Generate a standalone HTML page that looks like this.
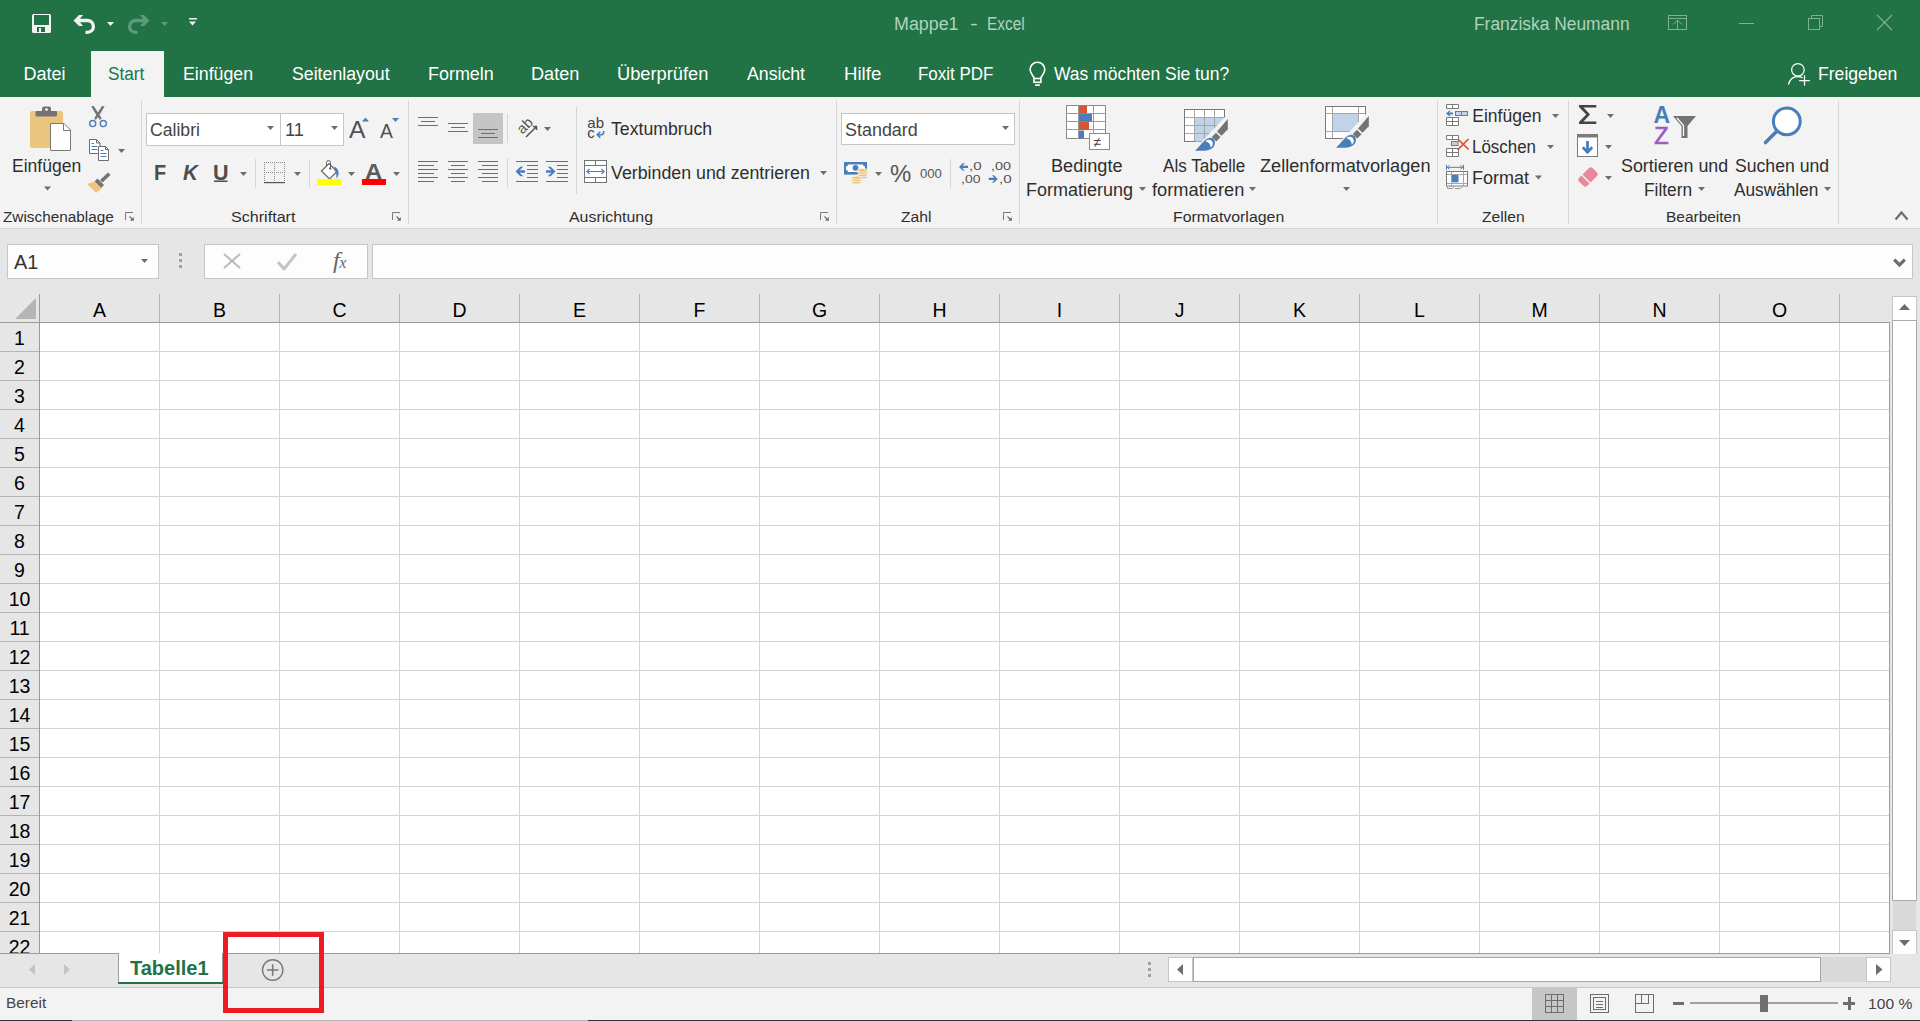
<!DOCTYPE html>
<html><head><meta charset="utf-8"><title>Excel</title><style>
html,body{margin:0;padding:0}
body{width:1920px;height:1021px;overflow:hidden;position:relative;background:#fff;font-family:"Liberation Sans",sans-serif}
.tx{position:absolute;white-space:pre;transform-origin:0 0}
svg{position:absolute;left:0;top:0}
.clip{position:absolute;left:0;top:954px;width:1920px;height:67px;overflow:hidden}
</style></head><body>
<svg width="1920" height="1021" viewBox="0 0 1920 1021">
<rect x="0" y="0" width="1920" height="97" fill="#217346" />
<rect x="91" y="51" width="73" height="46" fill="#f3f3f3" />
<rect x="0" y="97" width="1920" height="131" fill="#f3f3f3" />
<rect x="0" y="228" width="1920" height="1" fill="#d5d5d5" />
<rect x="0" y="229" width="1920" height="93" fill="#e6e6e6" />
<rect x="7" y="244" width="152" height="35" fill="#c6c6c6" />
<rect x="8" y="245" width="150" height="33" fill="#fdfdfd" />
<rect x="204" y="244" width="164" height="35" fill="#c6c6c6" />
<rect x="205" y="245" width="162" height="33" fill="#fdfdfd" />
<rect x="372" y="244" width="1541" height="35" fill="#c6c6c6" />
<rect x="373" y="245" width="1539" height="33" fill="#fdfdfd" />
<polygon points="141,259 148,259 144.5,263" fill="#6d6d6d"/>
<path d="M1895.3 260.7 L1899.5 264.9 L1903.7 260.7" stroke="#6d6d6d" stroke-width="3.2" fill="none" stroke-linecap="square"/>
<rect x="179" y="253" width="3" height="3" fill="#a0a0a0" />
<rect x="179" y="259" width="3" height="3" fill="#a0a0a0" />
<rect x="179" y="265" width="3" height="3" fill="#a0a0a0" />
<path d="M224 254 L240 268 M240 254 L224 268" stroke="#bdbdbd" stroke-width="2.2" fill="none"/>
<path d="M278 262 L284 269 L296 254" stroke="#c4c4c4" stroke-width="3" fill="none" stroke-linejoin="round"/>
<rect x="40" y="323" width="1849" height="630" fill="#ffffff" />
<rect x="0" y="323" width="39" height="630" fill="#e6e6e6" />
<rect x="159" y="294" width="1" height="28" fill="#b4b4b4" />
<rect x="279" y="294" width="1" height="28" fill="#b4b4b4" />
<rect x="399" y="294" width="1" height="28" fill="#b4b4b4" />
<rect x="519" y="294" width="1" height="28" fill="#b4b4b4" />
<rect x="639" y="294" width="1" height="28" fill="#b4b4b4" />
<rect x="759" y="294" width="1" height="28" fill="#b4b4b4" />
<rect x="879" y="294" width="1" height="28" fill="#b4b4b4" />
<rect x="999" y="294" width="1" height="28" fill="#b4b4b4" />
<rect x="1119" y="294" width="1" height="28" fill="#b4b4b4" />
<rect x="1239" y="294" width="1" height="28" fill="#b4b4b4" />
<rect x="1359" y="294" width="1" height="28" fill="#b4b4b4" />
<rect x="1479" y="294" width="1" height="28" fill="#b4b4b4" />
<rect x="1599" y="294" width="1" height="28" fill="#b4b4b4" />
<rect x="1719" y="294" width="1" height="28" fill="#b4b4b4" />
<rect x="1839" y="294" width="1" height="28" fill="#b4b4b4" />
<rect x="40" y="351" width="1849" height="1" fill="#d4d4d4" />
<rect x="0" y="351" width="39" height="1" fill="#b4b4b4" />
<rect x="40" y="380" width="1849" height="1" fill="#d4d4d4" />
<rect x="0" y="380" width="39" height="1" fill="#b4b4b4" />
<rect x="40" y="409" width="1849" height="1" fill="#d4d4d4" />
<rect x="0" y="409" width="39" height="1" fill="#b4b4b4" />
<rect x="40" y="438" width="1849" height="1" fill="#d4d4d4" />
<rect x="0" y="438" width="39" height="1" fill="#b4b4b4" />
<rect x="40" y="467" width="1849" height="1" fill="#d4d4d4" />
<rect x="0" y="467" width="39" height="1" fill="#b4b4b4" />
<rect x="40" y="496" width="1849" height="1" fill="#d4d4d4" />
<rect x="0" y="496" width="39" height="1" fill="#b4b4b4" />
<rect x="40" y="525" width="1849" height="1" fill="#d4d4d4" />
<rect x="0" y="525" width="39" height="1" fill="#b4b4b4" />
<rect x="40" y="554" width="1849" height="1" fill="#d4d4d4" />
<rect x="0" y="554" width="39" height="1" fill="#b4b4b4" />
<rect x="40" y="583" width="1849" height="1" fill="#d4d4d4" />
<rect x="0" y="583" width="39" height="1" fill="#b4b4b4" />
<rect x="40" y="612" width="1849" height="1" fill="#d4d4d4" />
<rect x="0" y="612" width="39" height="1" fill="#b4b4b4" />
<rect x="40" y="641" width="1849" height="1" fill="#d4d4d4" />
<rect x="0" y="641" width="39" height="1" fill="#b4b4b4" />
<rect x="40" y="670" width="1849" height="1" fill="#d4d4d4" />
<rect x="0" y="670" width="39" height="1" fill="#b4b4b4" />
<rect x="40" y="699" width="1849" height="1" fill="#d4d4d4" />
<rect x="0" y="699" width="39" height="1" fill="#b4b4b4" />
<rect x="40" y="728" width="1849" height="1" fill="#d4d4d4" />
<rect x="0" y="728" width="39" height="1" fill="#b4b4b4" />
<rect x="40" y="757" width="1849" height="1" fill="#d4d4d4" />
<rect x="0" y="757" width="39" height="1" fill="#b4b4b4" />
<rect x="40" y="786" width="1849" height="1" fill="#d4d4d4" />
<rect x="0" y="786" width="39" height="1" fill="#b4b4b4" />
<rect x="40" y="815" width="1849" height="1" fill="#d4d4d4" />
<rect x="0" y="815" width="39" height="1" fill="#b4b4b4" />
<rect x="40" y="844" width="1849" height="1" fill="#d4d4d4" />
<rect x="0" y="844" width="39" height="1" fill="#b4b4b4" />
<rect x="40" y="873" width="1849" height="1" fill="#d4d4d4" />
<rect x="0" y="873" width="39" height="1" fill="#b4b4b4" />
<rect x="40" y="902" width="1849" height="1" fill="#d4d4d4" />
<rect x="0" y="902" width="39" height="1" fill="#b4b4b4" />
<rect x="40" y="931" width="1849" height="1" fill="#d4d4d4" />
<rect x="0" y="931" width="39" height="1" fill="#b4b4b4" />
<rect x="159" y="323" width="1" height="630" fill="#d4d4d4" />
<rect x="279" y="323" width="1" height="630" fill="#d4d4d4" />
<rect x="399" y="323" width="1" height="630" fill="#d4d4d4" />
<rect x="519" y="323" width="1" height="630" fill="#d4d4d4" />
<rect x="639" y="323" width="1" height="630" fill="#d4d4d4" />
<rect x="759" y="323" width="1" height="630" fill="#d4d4d4" />
<rect x="879" y="323" width="1" height="630" fill="#d4d4d4" />
<rect x="999" y="323" width="1" height="630" fill="#d4d4d4" />
<rect x="1119" y="323" width="1" height="630" fill="#d4d4d4" />
<rect x="1239" y="323" width="1" height="630" fill="#d4d4d4" />
<rect x="1359" y="323" width="1" height="630" fill="#d4d4d4" />
<rect x="1479" y="323" width="1" height="630" fill="#d4d4d4" />
<rect x="1599" y="323" width="1" height="630" fill="#d4d4d4" />
<rect x="1719" y="323" width="1" height="630" fill="#d4d4d4" />
<rect x="1839" y="323" width="1" height="630" fill="#d4d4d4" />
<rect x="0" y="322" width="1889" height="1" fill="#9b9b9b" />
<rect x="39" y="294" width="1" height="659" fill="#9b9b9b" />
<rect x="1889" y="322" width="1" height="632" fill="#9b9b9b" />
<polygon points="15,319 36,319 36,298" fill="#b5b5b5"/>
<rect x="1890" y="322" width="30" height="632" fill="#e6e6e6" />
<rect x="1892" y="296" width="25" height="25" fill="#c6c6c6" />
<rect x="1893" y="297" width="23" height="23" fill="#fff" />
<polygon points="1899,310 1910,310 1904.5,304" fill="#6d6d6d"/>
<rect x="1892" y="320" width="25" height="581" fill="#ababab" />
<rect x="1893" y="321" width="23" height="579" fill="#fff" />
<rect x="1893" y="901" width="23" height="29" fill="#d9d9d9" />
<rect x="1892" y="930" width="25" height="25" fill="#c6c6c6" />
<rect x="1893" y="931" width="23" height="23" fill="#fdfdfd" />
<polygon points="1899,940 1910,940 1904.5,946" fill="#6d6d6d"/>
<rect x="0" y="954" width="1920" height="33" fill="#e6e6e6" />
<rect x="0" y="953" width="1890" height="1" fill="#9b9b9b" />
<rect x="0" y="987" width="1920" height="1" fill="#c8c8c8" />
<rect x="118" y="953" width="105" height="30" fill="#ffffff" />
<rect x="118" y="953" width="1" height="30" fill="#9b9b9b" />
<rect x="222" y="953" width="1" height="30" fill="#9b9b9b" />
<rect x="119" y="953" width="103" height="1" fill="#ffffff" />
<rect x="118" y="982" width="105" height="2" fill="#217346" />
<polygon points="35,964 35,975 29,969.5" fill="#c3c3c3"/>
<polygon points="64,964 64,975 70,969.5" fill="#c3c3c3"/>
<circle cx="272.7" cy="970" r="10.2" stroke="#7a7a7a" stroke-width="1.4" fill="none"/>
<path d="M267 970 H278.4 M272.7 964.3 V975.7" stroke="#7a7a7a" stroke-width="1.6"/>
<rect x="1148" y="962" width="3" height="3" fill="#a0a0a0" />
<rect x="1148" y="968" width="3" height="3" fill="#a0a0a0" />
<rect x="1148" y="974" width="3" height="3" fill="#a0a0a0" />
<rect x="1168" y="957" width="25" height="25" fill="#c6c6c6" />
<rect x="1169" y="958" width="23" height="23" fill="#fff" />
<polygon points="1183,964 1183,975 1177,969.5" fill="#6d6d6d"/>
<rect x="1193" y="957" width="628" height="25" fill="#a6a6a6" />
<rect x="1194" y="958" width="626" height="23" fill="#fff" />
<rect x="1821" y="957" width="45" height="25" fill="#d9d9d9" />
<rect x="1866" y="957" width="25" height="25" fill="#c6c6c6" />
<rect x="1867" y="958" width="23" height="23" fill="#fff" />
<polygon points="1876,964 1876,975 1882.5,969.5" fill="#6d6d6d"/>
<rect x="0" y="988" width="1920" height="32" fill="#f3f3f3" />
<rect x="0" y="1020" width="72" height="1" fill="#333" />
<rect x="72" y="1020" width="516" height="1" fill="#b8b8b8" />
<rect x="588" y="1020" width="1332" height="1" fill="#333" />
<rect x="1532" y="988" width="45" height="32" fill="#c6c6c6" />
<g stroke="#6d6d6d" stroke-width="1" fill="none" shape-rendering="crispEdges">
<rect x="1545.5" y="994.5" width="18" height="18"/><path d="M1551.5 994.5V1012.5M1557.5 994.5V1012.5M1545.5 1000.5H1563.5M1545.5 1006.5H1563.5"/>
<rect x="1590.5" y="994.5" width="18" height="18"/><rect x="1593.5" y="997.5" width="12" height="12"/><path d="M1596 1001.5H1603M1596 1004.5H1603M1596 1007.5H1603"/>
<rect x="1635.5" y="994.5" width="18" height="18"/><path d="M1635.5 1003.5H1648.5V994.5M1641.5 994.5V1003.5"/>
</g>
<rect x="1673" y="1002" width="11" height="3" fill="#6d6d6d" />
<rect x="1690" y="1002" width="148" height="2" fill="#a0a0a0" />
<rect x="1760" y="995" width="8" height="17" fill="#6f6f6f" />
<rect x="1843" y="1002" width="12" height="3" fill="#6d6d6d" />
<rect x="1848" y="997" width="3" height="13" fill="#6d6d6d" />
<rect x="225.5" y="934.5" width="96" height="76" stroke="#ec1c24" stroke-width="5" fill="none"/>
<rect x="141" y="101" width="1" height="123" fill="#d5d5d5" />
<rect x="408" y="101" width="1" height="123" fill="#d5d5d5" />
<rect x="836" y="101" width="1" height="123" fill="#d5d5d5" />
<rect x="1019" y="101" width="1" height="123" fill="#d5d5d5" />
<rect x="1437" y="101" width="1" height="123" fill="#d5d5d5" />
<rect x="1568" y="101" width="1" height="123" fill="#d5d5d5" />
<rect x="1838" y="101" width="1" height="123" fill="#d5d5d5" />
<rect x="255" y="159" width="1" height="29" fill="#d5d5d5" />
<rect x="309" y="159" width="1" height="29" fill="#d5d5d5" />
<rect x="507" y="114" width="1" height="29" fill="#d5d5d5" />
<rect x="507" y="158" width="1" height="29" fill="#d5d5d5" />
<rect x="576" y="107" width="1" height="87" fill="#d5d5d5" />
<rect x="950" y="159" width="1" height="29" fill="#d5d5d5" />
<path d="M125.5 220 V212.5 H133" stroke="#7a7a7a" stroke-width="1" fill="none"/>
<path d="M129.5 216.5 L132.5 219.5" stroke="#6d6d6d" stroke-width="1.1" fill="none"/>
<polygon points="130,220.8 133.8,220.8 133.8,217" fill="#6d6d6d"/>
<path d="M392.5 220 V212.5 H400" stroke="#7a7a7a" stroke-width="1" fill="none"/>
<path d="M396.5 216.5 L399.5 219.5" stroke="#6d6d6d" stroke-width="1.1" fill="none"/>
<polygon points="397,220.8 400.8,220.8 400.8,217" fill="#6d6d6d"/>
<path d="M820.5 220 V212.5 H828" stroke="#7a7a7a" stroke-width="1" fill="none"/>
<path d="M824.5 216.5 L827.5 219.5" stroke="#6d6d6d" stroke-width="1.1" fill="none"/>
<polygon points="825,220.8 828.8,220.8 828.8,217" fill="#6d6d6d"/>
<path d="M1003.5 220 V212.5 H1011" stroke="#7a7a7a" stroke-width="1" fill="none"/>
<path d="M1007.5 216.5 L1010.5 219.5" stroke="#6d6d6d" stroke-width="1.1" fill="none"/>
<polygon points="1008,220.8 1011.8,220.8 1011.8,217" fill="#6d6d6d"/>
<path d="M1895.5 219.5 L1901.5 212.5 L1907.5 219.5" stroke="#6d6d6d" stroke-width="2.2" fill="none"/>
<rect x="32" y="14" width="19" height="19" rx="1.5" fill="#f2f2f2"/>
<rect x="34" y="15" width="15" height="10" fill="#217346" />
<rect x="37" y="27" width="8" height="5" fill="#217346" />
<rect x="39" y="28" width="2" height="4" fill="#f2f2f2" />
<g fill="#f2f2f2" stroke="#f2f2f2" stroke-width="0"><polygon points="73.5,20.5 79,15.1 83.1,15.1 79.8,18.8 79.8,22.2 83.1,25.9 79,25.9"/><path d="M79.5 20.5 H87 C91 20.5 93.4 23 93.4 26.4 C93.4 30 90.5 32.35 86.5 32.35 H85.5" stroke="#f2f2f2" stroke-width="3.3" fill="none"/><rect x="79" y="18.8" width="2" height="3.4"/></g>
<polygon points="107,22 114,22 110.5,26" fill="#f2f2f2"/>
<g transform="translate(223 0) scale(-1 1)" fill="#5c9c78"><polygon points="73.5,20.5 79,15.1 83.1,15.1 79.8,18.8 79.8,22.2 83.1,25.9 79,25.9"/><path d="M79.5 20.5 H87 C91 20.5 93.4 23 93.4 26.4 C93.4 30 90.5 32.35 86.5 32.35 H85.5" stroke="#5c9c78" stroke-width="3.3" fill="none"/><rect x="79" y="18.8" width="2" height="3.4"/></g>
<polygon points="161,22 168,22 164.5,26" fill="#5c9c78"/>
<rect x="189" y="18" width="8" height="1.5" fill="#f2f2f2" />
<polygon points="189,21.5 196,21.5 192.5,25.5" fill="#f2f2f2"/>
<g stroke="#7db291" stroke-width="1" fill="none"><rect x="1668.5" y="15.5" width="18" height="14"/><path d="M1668.5 18.5H1686.5M1677.5 29.5V20M1673 24.5L1677.5 20L1682 24.5"/></g>
<rect x="1739" y="23" width="15" height="1" fill="#7db291" />
<g stroke="#7db291" stroke-width="1" fill="none"><rect x="1808.5" y="18.5" width="11" height="11"/><path d="M1811.5 18.5V15.5H1822.5V26.5H1819.5"/></g>
<path d="M1877 15 L1892 30 M1892 15 L1877 30" stroke="#7db291" stroke-width="1.1"/>
<g stroke="#fff" stroke-width="1.25" fill="none"><circle cx="1797.9" cy="69.85" r="6.3"/><path d="M1788.4 84.6 C1789.5 80 1793 76.6 1797.7 76.6 C1799.5 76.6 1801.2 77 1802.5 77.8"/><path d="M1799.1 80.5H1809.9M1804.5 75.2V85.7"/></g>
<g stroke="#fff" stroke-width="1.6" fill="none"><path d="M1034.2 78.5 C1033.8 75.8 1030.1 73.8 1030.1 69.6 A7.35 7.35 0 0 1 1044.8 69.6 C1044.8 73.8 1041.1 75.8 1040.7 78.5"/><rect x="1034" y="78.5" width="6.9" height="3.8"/></g>
<rect x="1035.1" y="84.3" width="4.7" height="1.7" fill="#fff" />
<rect x="30" y="111" width="33" height="37" rx="2.5" fill="#ebc47e"/>
<rect x="35.5" y="111" width="21.5" height="5.5" rx="1" fill="#737373"/>
<path d="M42 113 V108.5 A2 2 0 0 1 44 106.5 H49 A2 2 0 0 1 51 108.5 V113 Z" fill="#737373"/>
<circle cx="46.5" cy="109.6" r="1.4" fill="#f3f3f3"/>
<path d="M50.5 123.5 H64 L70.5 130 V150.5 H50.5 Z" fill="#fff" stroke="#7a7a7a" stroke-width="1"/>
<path d="M63.5 123.5 V130.5 H70.5" fill="none" stroke="#7a7a7a" stroke-width="1"/>
<polygon points="44,186.5 51,186.5 47.5,190.5" fill="#6d6d6d"/>
<polygon points="91.2,106.2 93.8,106 101.6,118.2 100,120 94.5,112" fill="#737373"/>
<polygon points="104.6,106.2 102,106 94.2,118.2 95.8,120 101.3,112" fill="#737373"/>
<circle cx="92.7" cy="123.6" r="3.05" stroke="#4a7ebb" stroke-width="1.35" fill="#f3f3f3"/><circle cx="103.3" cy="123.6" r="3.05" stroke="#4a7ebb" stroke-width="1.35" fill="#f3f3f3"/>
<path d="M89.5 139.5 H96.5 L100 143 V153.5 H89.5 Z" fill="#fff" stroke="#6d6d6d"/><path d="M96.5 139.5 V143 H100" fill="none" stroke="#6d6d6d"/>
<path d="M91.5 143.5H94M91.5 146.5H97.5M91.5 149.5H97.5" stroke="#4a7ebb" stroke-width="1"/>
<path d="M98.5 146.5 H105.5 L108.5 149.5 V160.5 H98.5 Z" fill="#fff" stroke="#6d6d6d"/><path d="M105.5 146.5 V149.5 H108.5" fill="none" stroke="#6d6d6d"/>
<path d="M100.5 150.5H103.5M100.5 153.5H106.5M100.5 156.5H106.5" stroke="#4a7ebb" stroke-width="1"/>
<polygon points="118,149 125,149 121.5,153" fill="#6d6d6d"/>
<path d="M100 180 L108 172.5 L110.5 175 L102.5 182.5 Z" fill="#737373"/>
<path d="M97.5 178.5 L104 185 L101 188 L94.5 181.5 Z" fill="#737373"/>
<path d="M94.5 181.5 L101.5 188.5 L96 193 L87 184 Z" fill="#ebc47e"/>
<rect x="146" y="113" width="135" height="33" fill="#c6c6c6" />
<rect x="147" y="114" width="133" height="31" fill="#fff" />
<rect x="280" y="113" width="64" height="33" fill="#c6c6c6" />
<rect x="281" y="114" width="62" height="31" fill="#fff" />
<polygon points="267,126 274,126 270.5,130" fill="#6d6d6d"/>
<polygon points="331,126 338,126 334.5,130" fill="#6d6d6d"/>
<polygon points="362,121.5 369,121.5 365.5,117.5" fill="#4a7ebb"/>
<polygon points="392,118 399,118 395.5,122" fill="#4a7ebb"/>
<rect x="214" y="180.5" width="13.5" height="1.5" fill="#4d4d4d" />
<polygon points="240,172 247,172 243.5,176" fill="#6d6d6d"/>
<g fill="#8a8a8a">
<rect x="264" y="162" width="1" height="1"/><rect x="264" y="172" width="1" height="1"/>
<rect x="264" y="162" width="1" height="1"/><rect x="274" y="162" width="1" height="1"/><rect x="284" y="162" width="1" height="1"/>
<rect x="266" y="162" width="1" height="1"/><rect x="266" y="172" width="1" height="1"/>
<rect x="264" y="164" width="1" height="1"/><rect x="274" y="164" width="1" height="1"/><rect x="284" y="164" width="1" height="1"/>
<rect x="268" y="162" width="1" height="1"/><rect x="268" y="172" width="1" height="1"/>
<rect x="264" y="166" width="1" height="1"/><rect x="274" y="166" width="1" height="1"/><rect x="284" y="166" width="1" height="1"/>
<rect x="270" y="162" width="1" height="1"/><rect x="270" y="172" width="1" height="1"/>
<rect x="264" y="168" width="1" height="1"/><rect x="274" y="168" width="1" height="1"/><rect x="284" y="168" width="1" height="1"/>
<rect x="272" y="162" width="1" height="1"/><rect x="272" y="172" width="1" height="1"/>
<rect x="264" y="170" width="1" height="1"/><rect x="274" y="170" width="1" height="1"/><rect x="284" y="170" width="1" height="1"/>
<rect x="274" y="162" width="1" height="1"/><rect x="274" y="172" width="1" height="1"/>
<rect x="264" y="172" width="1" height="1"/><rect x="274" y="172" width="1" height="1"/><rect x="284" y="172" width="1" height="1"/>
<rect x="276" y="162" width="1" height="1"/><rect x="276" y="172" width="1" height="1"/>
<rect x="264" y="174" width="1" height="1"/><rect x="274" y="174" width="1" height="1"/><rect x="284" y="174" width="1" height="1"/>
<rect x="278" y="162" width="1" height="1"/><rect x="278" y="172" width="1" height="1"/>
<rect x="264" y="176" width="1" height="1"/><rect x="274" y="176" width="1" height="1"/><rect x="284" y="176" width="1" height="1"/>
<rect x="280" y="162" width="1" height="1"/><rect x="280" y="172" width="1" height="1"/>
<rect x="264" y="178" width="1" height="1"/><rect x="274" y="178" width="1" height="1"/><rect x="284" y="178" width="1" height="1"/>
<rect x="282" y="162" width="1" height="1"/><rect x="282" y="172" width="1" height="1"/>
<rect x="264" y="180" width="1" height="1"/><rect x="274" y="180" width="1" height="1"/><rect x="284" y="180" width="1" height="1"/>
<rect x="284" y="162" width="1" height="1"/><rect x="284" y="172" width="1" height="1"/>
<rect x="264" y="182" width="1" height="1"/><rect x="274" y="182" width="1" height="1"/><rect x="284" y="182" width="1" height="1"/>
</g>
<rect x="264" y="182" width="21" height="1.2" fill="#555" />
<polygon points="294,172 301,172 297.5,176" fill="#6d6d6d"/>
<path d="M321.5 171 L329 163.5 L337 171.5 L329.5 179 Z" fill="#fff" stroke="#666" stroke-width="1.2"/>
<path d="M326.5 166 V162.5 A2 2 0 0 1 330.5 162.5 V168" fill="none" stroke="#666" stroke-width="1"/><circle cx="330.2" cy="168.5" r="1.2" fill="#666"/>
<path d="M334.5 166.5 C337.5 168 339 171 338.5 174 C338.2 176 337.5 177.5 336.5 178.5 C336.8 175 336 171.5 334.2 170 Z" fill="#4a7ebb"/>
<rect x="317" y="179" width="24" height="6" fill="#ffff00" />
<polygon points="348,172 355,172 351.5,176" fill="#6d6d6d"/>
<rect x="362" y="179" width="24" height="6" fill="#ff0000" />
<polygon points="393,172 400,172 396.5,176" fill="#6d6d6d"/>
<rect x="418.0" y="117" width="20" height="1" fill="#6d6d6d" />
<rect x="421.0" y="121" width="14" height="1" fill="#6d6d6d" />
<rect x="418.0" y="125" width="20" height="1" fill="#6d6d6d" />
<rect x="448.0" y="123" width="20" height="1" fill="#6d6d6d" />
<rect x="451.0" y="127" width="14" height="1" fill="#6d6d6d" />
<rect x="448.0" y="131" width="20" height="1" fill="#6d6d6d" />
<rect x="473" y="113" width="30" height="31" fill="#c5c5c5" />
<rect x="478.0" y="129" width="20" height="1" fill="#6d6d6d" />
<rect x="481.0" y="133" width="14" height="1" fill="#6d6d6d" />
<rect x="478.0" y="137" width="20" height="1" fill="#6d6d6d" />
<text x="0" y="0" transform="translate(522.5 134.8) rotate(-45)" font-family="Liberation Sans" font-size="14.5" fill="#555">ab</text>
<path d="M526 137 L536.3 126.7 M533 126.5 H536.5 V130" stroke="#555" stroke-width="1.5" fill="none"/>
<polygon points="544,127 551,127 547.5,131" fill="#6d6d6d"/>
<rect x="418" y="161" width="20" height="1" fill="#6d6d6d" />
<rect x="418" y="165" width="16" height="1" fill="#6d6d6d" />
<rect x="418" y="169" width="20" height="1" fill="#6d6d6d" />
<rect x="418" y="173" width="16" height="1" fill="#6d6d6d" />
<rect x="418" y="177" width="20" height="1" fill="#6d6d6d" />
<rect x="418" y="181" width="16" height="1" fill="#6d6d6d" />
<rect x="448.0" y="161" width="20" height="1" fill="#6d6d6d" />
<rect x="451.0" y="165" width="14" height="1" fill="#6d6d6d" />
<rect x="448.0" y="169" width="20" height="1" fill="#6d6d6d" />
<rect x="451.0" y="173" width="14" height="1" fill="#6d6d6d" />
<rect x="448.0" y="177" width="20" height="1" fill="#6d6d6d" />
<rect x="451.0" y="181" width="14" height="1" fill="#6d6d6d" />
<rect x="478" y="161" width="20" height="1" fill="#6d6d6d" />
<rect x="482" y="165" width="16" height="1" fill="#6d6d6d" />
<rect x="478" y="169" width="20" height="1" fill="#6d6d6d" />
<rect x="482" y="173" width="16" height="1" fill="#6d6d6d" />
<rect x="478" y="177" width="20" height="1" fill="#6d6d6d" />
<rect x="482" y="181" width="16" height="1" fill="#6d6d6d" />
<rect x="516" y="161" width="22" height="1" fill="#6d6d6d" />
<rect x="516" y="181" width="22" height="1" fill="#6d6d6d" />
<rect x="527" y="165" width="11" height="1" fill="#6d6d6d" />
<rect x="527" y="169" width="11" height="1" fill="#6d6d6d" />
<rect x="527" y="173" width="11" height="1" fill="#6d6d6d" />
<rect x="527" y="177" width="11" height="1" fill="#6d6d6d" />
<polygon points="515.5,171.5 520.3,166.7 523.3,166.7 519.6,170.2 525,170.2 525,172.8 519.6,172.8 523.3,176.3 520.3,176.3" fill="#4a7ebb"/>
<rect x="546" y="161" width="22" height="1" fill="#6d6d6d" />
<rect x="546" y="181" width="22" height="1" fill="#6d6d6d" />
<rect x="557" y="165" width="11" height="1" fill="#6d6d6d" />
<rect x="557" y="169" width="11" height="1" fill="#6d6d6d" />
<rect x="557" y="173" width="11" height="1" fill="#6d6d6d" />
<rect x="557" y="177" width="11" height="1" fill="#6d6d6d" />
<polygon points="555.5,171.5 550.7,166.7 547.7,166.7 551.4,170.2 546,170.2 546,172.8 551.4,172.8 547.7,176.3 550.7,176.3" fill="#4a7ebb"/>
<text x="587.3" y="128" font-family="Liberation Sans" font-size="15" fill="#444">ab</text>
<text x="587.3" y="138" font-family="Liberation Sans" font-size="15" fill="#444">c</text>
<path d="M603.6 131 V132.5 C603.6 134 602.5 134.8 601 134.8 H597.5 M600.3 131.8 L597.3 134.8 L600.3 137.6" stroke="#4a7ebb" stroke-width="1.6" fill="none"/>
<g stroke="#737373" stroke-width="1" fill="#fff"><rect x="584.5" y="160.5" width="22" height="22"/></g>
<path d="M584.5 165.5H606.5M584.5 177.5H606.5M595.5 160.5V165.5M595.5 177.5V182.5" stroke="#737373" stroke-width="1"/>
<path d="M587 171.5 H604 M589.5 169 L587 171.5 L589.5 174 M601.5 169 L604 171.5 L601.5 174" stroke="#4a7ebb" stroke-width="1.2" fill="none"/>
<polygon points="820,171 827,171 823.5,175" fill="#6d6d6d"/>
<rect x="841" y="113" width="174" height="32" fill="#c6c6c6" />
<rect x="842" y="114" width="172" height="30" fill="#fff" />
<polygon points="1002,126 1009,126 1005.5,130" fill="#6d6d6d"/>
<rect x="844" y="162" width="23" height="12.6" fill="#4a7ebb"/><path d="M848 164.5 H863 A2 2 0 0 0 865 166.5 V170 A2 2 0 0 0 863 172 H848 A2 2 0 0 0 846 170 V166.5 A2 2 0 0 0 848 164.5 Z" fill="#fff"/><circle cx="855.5" cy="167.8" r="2.9" fill="#4a7ebb"/>
<g fill="#ebc47e" stroke="#f3f3f3" stroke-width="0.9">
<ellipse cx="862.5" cy="177.2" rx="4.9" ry="1.8"/>
<ellipse cx="862.5" cy="174.89999999999998" rx="4.9" ry="1.8"/>
<ellipse cx="862.5" cy="172.6" rx="4.9" ry="1.8"/>
<ellipse cx="862.5" cy="170.29999999999998" rx="4.9" ry="1.8"/>
<ellipse cx="856.5" cy="182.3" rx="4.9" ry="1.8"/>
<ellipse cx="856.5" cy="180.0" rx="4.9" ry="1.8"/>
<ellipse cx="856.5" cy="177.70000000000002" rx="4.9" ry="1.8"/>
</g>
<polygon points="875,172 882,172 878.5,176" fill="#6d6d6d"/>
<polygon points="959,166.9 962.6,163.3 964.8,163.3 962.3,165.8 968,165.8 968,168 962.3,168 964.8,170.5 962.6,170.5" fill="#4a7ebb"/>
<polygon points="997.7,178.9 994.1,175.3 991.9,175.3 994.4,177.8 988.7,177.8 988.7,180 994.4,180 991.9,182.5 994.1,182.5" fill="#4a7ebb"/>
<rect x="1066.5" y="105.5" width="39" height="33" fill="#fff" stroke="#8a8a8a"/>
<path d="M1078.5 105.5V138.5M1093.5 105.5V138.5M1066.5 113.5H1105.5M1066.5 121.5H1105.5M1066.5 129.5H1105.5" stroke="#9a9a9a"/>
<rect x="1079" y="106" width="8" height="7.5" fill="#d65532" />
<rect x="1079" y="114" width="13" height="7.5" fill="#4a7ebb" />
<rect x="1079" y="122" width="10" height="8" fill="#d65532" />
<rect x="1079" y="130.5" width="5" height="8" fill="#4a7ebb" />
<rect x="1089.5" y="133.5" width="20" height="16" fill="#fff" stroke="#8a8a8a"/>
<text x="1093.5" y="146.5" font-family="Liberation Sans" font-size="14" fill="#444">≠</text>
<polygon points="1139,187 1146,187 1142.5,191" fill="#6d6d6d"/>
<rect x="1184.5" y="109.5" width="40" height="32" fill="#fff" stroke="#7a7a7a"/>
<rect x="1195" y="117.5" width="29.5" height="24" fill="#c0d3e8" />
<path d="M1194.5 110V141M1204.5 110V141M1214.5 110V141M1185 117.5H1224M1185 125.5H1224M1185 133.5H1224" stroke="#a6a6a6"/>
<polygon points="1200.5,143 1225.5,116.5 1231,116.5 1231,143" fill="#f3f3f3"/>
<g transform="translate(0 0)"><polygon points="1217,131.5 1227.8,119 1227.8,129.3 1221.5,135.8" fill="#737373"/><polygon points="1211.8,137 1216,132.8 1220.5,137.3 1216.3,141.5" fill="#737373"/><path d="M1195 150.8 C1200 146 1203 141 1207.5 138.5 C1212 136 1216 139.5 1214.7 144.5 C1213.5 149 1208 150.8 1203 150.8 Z" fill="#4a7ebb"/><path d="M1205.5 141.2 C1208 138.6 1212.6 139.5 1212.8 143.3 C1212.9 145.3 1212 146.5 1210.8 147.5 C1210.5 144.5 1209 142 1205.5 141.2 Z" fill="#fff"/></g>
<polygon points="1249,187 1256,187 1252.5,191" fill="#6d6d6d"/>
<rect x="1325.5" y="106.5" width="40" height="32" fill="#fff" stroke="#7a7a7a"/>
<rect x="1333" y="114" width="25" height="17.5" fill="#c0d3e8" />
<path d="M1332.5 107V138M1358.5 107V138M1326 113.5H1365M1326 131.5H1365" stroke="#a6a6a6"/>
<polygon points="1341.5,140 1366.5,113.5 1372,113.5 1372,140" fill="#f3f3f3"/>
<g transform="translate(141 -3)"><polygon points="1217,131.5 1227.8,119 1227.8,129.3 1221.5,135.8" fill="#737373"/><polygon points="1211.8,137 1216,132.8 1220.5,137.3 1216.3,141.5" fill="#737373"/><path d="M1195 150.8 C1200 146 1203 141 1207.5 138.5 C1212 136 1216 139.5 1214.7 144.5 C1213.5 149 1208 150.8 1203 150.8 Z" fill="#4a7ebb"/><path d="M1205.5 141.2 C1208 138.6 1212.6 139.5 1212.8 143.3 C1212.9 145.3 1212 146.5 1210.8 147.5 C1210.5 144.5 1209 142 1205.5 141.2 Z" fill="#fff"/></g>
<polygon points="1343,187 1350,187 1346.5,191" fill="#6d6d6d"/>
<path d="M1446.5 104.5H1458.5V108.5H1446.5Z M1452.5 104.5V108.5" stroke="#7a7a7a" fill="#fff"/>
<path d="M1446.5 117.5H1458.5V125.5H1446.5Z M1452.5 117.5V125.5 M1446.5 121.5H1458.5" stroke="#7a7a7a" fill="#fff"/>
<rect x="1455.5" y="111.5" width="12" height="4" fill="#c0d3e8" stroke="#7a7a7a"/><path d="M1461.5 111.5V115.5" stroke="#7a7a7a"/>
<polygon points="1446,113.5 1449.3,110.7 1450.8,110.7 1449,112.6 1453,112.6 1453,114.4 1449,114.4 1450.8,116.3 1449.3,116.3" fill="#4a7ebb"/>
<polygon points="1552,114 1559,114 1555.5,118" fill="#6d6d6d"/>
<path d="M1446.5 135.5H1458.5V139.5H1446.5Z M1452.5 135.5V139.5" stroke="#7a7a7a" fill="#fff"/>
<path d="M1446.5 148.5H1458.5V156.5H1446.5Z M1452.5 148.5V156.5 M1446.5 152.5H1458.5" stroke="#7a7a7a" fill="#fff"/>
<rect x="1451.5" y="141.5" width="6.5" height="4" fill="#c0d3e8" stroke="#7a7a7a"/>
<path d="M1458 139.3 L1468.7 149.5 M1468.5 139 L1457.5 149.8" stroke="#d65532" stroke-width="1.7"/>
<polygon points="1547,145 1554,145 1550.5,149" fill="#6d6d6d"/>
<path d="M1446.5 164.8V169.8M1463.5 164.8V169.8M1447 167.3H1463 M1449.5 165.3 L1447.2 167.3 L1449.5 169.3 M1460.5 165.3 L1462.8 167.3 L1460.5 169.3" stroke="#4a7ebb" stroke-width="1" fill="none"/>
<rect x="1446.5" y="171.5" width="21" height="14.5" fill="#fff" stroke="#7a7a7a"/>
<path d="M1447 174.5H1467M1447 183.5H1467M1451.5 172V186M1463.5 172V186" stroke="#a6a6a6" fill="none"/>
<rect x="1452" y="175" width="6.5" height="7.3" fill="#4a7ebb" />
<path d="M1447.5 186.5 V188.5 H1452.5 L1454.5 186.5 M1455 188.5 H1460.5 L1462.5 186.5" stroke="#9a9a9a" fill="none"/>
<polygon points="1535,175.5 1542,175.5 1538.5,179.5" fill="#6d6d6d"/>
<polygon points="1607,114 1614,114 1610.5,118" fill="#6d6d6d"/>
<path d="M1579 105 H1596.3 V107.5 H1583.5 L1590 114.5 L1583.5 121.4 H1596.3 V124 H1579 V122 L1586.3 114.5 L1579 107 Z" fill="#444"/>
<rect x="1577.5" y="134.5" width="20" height="22" fill="#fff" stroke="#7a7a7a"/>
<rect x="1578" y="134" width="20" height="3.5" fill="#7a7a7a" />
<path d="M1587.5 141 V152 M1582.8 147.2 L1587.5 152.3 L1592.2 147.2" stroke="#4a7ebb" stroke-width="2.8" fill="none"/>
<polygon points="1605,145 1612,145 1608.5,149" fill="#6d6d6d"/>
<path d="M1589 168 C1590 167 1591.5 167 1592.5 168 L1597 172.5 C1598 173.5 1598 175 1597 176 L1587 186 C1586 187 1584.5 187 1583.5 186 L1579 181.5 C1578 180.5 1578 179 1579 178 Z" fill="#e8899a"/>
<path d="M1582 175 L1590 183" stroke="#f3f3f3" stroke-width="1.6"/>
<polygon points="1605,176 1612,176 1608.5,180" fill="#6d6d6d"/>
<text x="1653.5" y="123" font-family="Liberation Sans" font-size="23" font-weight="bold" fill="#4a7ebb">A</text>
<text x="1654.2" y="144.1" font-family="Liberation Sans" font-size="23.5" fill="#9b59c5" stroke="#9b59c5" stroke-width="0.7">Z</text>
<path d="M1673 116 H1696 L1687.5 126 V138 H1681.5 V126 Z" fill="#737373"/>
<path d="M1677 118 L1683.5 125.5 V136" stroke="#fff" stroke-width="1.2" fill="none"/>
<polygon points="1698,187 1705,187 1701.5,191" fill="#6d6d6d"/>
<circle cx="1786.8" cy="121.4" r="13.4" fill="#fff" stroke="#4a7ebb" stroke-width="3"/>
<path d="M1777 131 L1765.5 142.5" stroke="#4a7ebb" stroke-width="3.6" stroke-linecap="round"/>
<polygon points="1824,187 1831,187 1827.5,191" fill="#6d6d6d"/>
<text x="333" y="267.5" font-family="Liberation Serif" font-style="italic" font-size="24" fill="#666">f</text><text x="339.3" y="267.6" font-family="Liberation Serif" font-style="italic" font-size="16" fill="#666">x</text>
</svg>
<div class="tx" style="left:894.01px;top:15.00px;font-size:18px;line-height:18px;color:#b0d2be;font-weight:400;font-style:normal;transform:scaleX(0.9921);">Mappe1</div>
<div class="tx" style="left:969.50px;top:15.00px;font-size:18px;line-height:18px;color:#b0d2be;font-weight:400;font-style:normal;transform:scaleX(1.3000);">-</div>
<div class="tx" style="left:987.34px;top:15.00px;font-size:18px;line-height:18px;color:#b0d2be;font-weight:400;font-style:normal;transform:scaleX(0.8571);">Excel</div>
<div class="tx" style="left:1474.33px;top:15.00px;font-size:18px;line-height:18px;color:#b0d2be;font-weight:400;font-style:normal;transform:scaleX(0.9660);">Franziska Neumann</div>
<div class="tx" style="left:23.60px;top:65.00px;font-size:18px;line-height:18px;color:#ffffff;font-weight:400;font-style:normal;">Datei</div>
<div class="tx" style="left:183.41px;top:65.00px;font-size:18px;line-height:18px;color:#ffffff;font-weight:400;font-style:normal;transform:scaleX(0.9870);">Einfügen</div>
<div class="tx" style="left:291.72px;top:65.00px;font-size:18px;line-height:18px;color:#ffffff;font-weight:400;font-style:normal;transform:scaleX(0.9847);">Seitenlayout</div>
<div class="tx" style="left:427.75px;top:65.00px;font-size:18px;line-height:18px;color:#ffffff;font-weight:400;font-style:normal;transform:scaleX(0.9961);">Formeln</div>
<div class="tx" style="left:531.49px;top:65.00px;font-size:18px;line-height:18px;color:#ffffff;font-weight:400;font-style:normal;transform:scaleX(1.0054);">Daten</div>
<div class="tx" style="left:617.24px;top:65.00px;font-size:18px;line-height:18px;color:#ffffff;font-weight:400;font-style:normal;transform:scaleX(1.0142);">Überprüfen</div>
<div class="tx" style="left:747.00px;top:65.00px;font-size:18px;line-height:18px;color:#ffffff;font-weight:400;font-style:normal;transform:scaleX(0.9831);">Ansicht</div>
<div class="tx" style="left:843.86px;top:65.00px;font-size:18px;line-height:18px;color:#ffffff;font-weight:400;font-style:normal;transform:scaleX(1.0353);">Hilfe</div>
<div class="tx" style="left:918.46px;top:65.00px;font-size:18px;line-height:18px;color:#ffffff;font-weight:400;font-style:normal;transform:scaleX(0.9436);">Foxit PDF</div>
<div class="tx" style="left:1054.00px;top:65.00px;font-size:18px;line-height:18px;color:#ffffff;font-weight:400;font-style:normal;transform:scaleX(0.9706);">Was möchten Sie tun?</div>
<div class="tx" style="left:1817.52px;top:65.00px;font-size:18px;line-height:18px;color:#ffffff;font-weight:400;font-style:normal;transform:scaleX(0.9772);">Freigeben</div>
<div class="tx" style="left:108.44px;top:65.00px;font-size:18px;line-height:18px;color:#217346;font-weight:400;font-style:normal;transform:scaleX(0.9568);">Start</div>
<div class="tx" style="left:12.20px;top:158.00px;font-size:17.5px;line-height:17.5px;color:#2e2e2e;font-weight:400;font-style:normal;transform:scaleX(1.0030);">Einfügen</div>
<div class="tx" style="left:150.49px;top:122.00px;font-size:17.5px;line-height:17.5px;color:#444;font-weight:400;font-style:normal;transform:scaleX(1.0063);">Calibri</div>
<div class="tx" style="left:285.26px;top:122.00px;font-size:17.5px;line-height:17.5px;color:#444;font-weight:400;font-style:normal;transform:scaleX(1.0437);">11</div>
<div class="tx" style="left:611.40px;top:121.00px;font-size:17.5px;line-height:17.5px;color:#2e2e2e;font-weight:400;font-style:normal;transform:scaleX(1.0091);">Textumbruch</div>
<div class="tx" style="left:611.40px;top:165.00px;font-size:17.5px;line-height:17.5px;color:#2e2e2e;font-weight:400;font-style:normal;transform:scaleX(1.0165);">Verbinden und zentrieren</div>
<div class="tx" style="left:845.48px;top:122.00px;font-size:17.5px;line-height:17.5px;color:#444;font-weight:400;font-style:normal;transform:scaleX(1.0246);">Standard</div>
<div class="tx" style="left:1050.76px;top:158.00px;font-size:17.5px;line-height:17.5px;color:#2e2e2e;font-weight:400;font-style:normal;transform:scaleX(1.0358);">Bedingte</div>
<div class="tx" style="left:1025.97px;top:182.00px;font-size:17.5px;line-height:17.5px;color:#2e2e2e;font-weight:400;font-style:normal;transform:scaleX(1.0275);">Formatierung</div>
<div class="tx" style="left:1163.20px;top:158.00px;font-size:17.5px;line-height:17.5px;color:#2e2e2e;font-weight:400;font-style:normal;transform:scaleX(0.9750);">Als Tabelle</div>
<div class="tx" style="left:1151.80px;top:182.00px;font-size:17.5px;line-height:17.5px;color:#2e2e2e;font-weight:400;font-style:normal;transform:scaleX(1.0437);">formatieren</div>
<div class="tx" style="left:1260.46px;top:158.00px;font-size:17.5px;line-height:17.5px;color:#2e2e2e;font-weight:400;font-style:normal;transform:scaleX(1.0370);">Zellenformatvorlagen</div>
<div class="tx" style="left:1472.30px;top:108.00px;font-size:17.5px;line-height:17.5px;color:#2e2e2e;font-weight:400;font-style:normal;">Einfügen</div>
<div class="tx" style="left:1472.33px;top:139.00px;font-size:17.5px;line-height:17.5px;color:#2e2e2e;font-weight:400;font-style:normal;transform:scaleX(0.9672);">Löschen</div>
<div class="tx" style="left:1472.27px;top:170.00px;font-size:17.5px;line-height:17.5px;color:#2e2e2e;font-weight:400;font-style:normal;transform:scaleX(1.0296);">Format</div>
<div class="tx" style="left:1620.58px;top:158.00px;font-size:17.5px;line-height:17.5px;color:#2e2e2e;font-weight:400;font-style:normal;transform:scaleX(1.0204);">Sortieren und</div>
<div class="tx" style="left:1644.21px;top:182.00px;font-size:17.5px;line-height:17.5px;color:#2e2e2e;font-weight:400;font-style:normal;transform:scaleX(0.9894);">Filtern</div>
<div class="tx" style="left:1735.49px;top:158.00px;font-size:17.5px;line-height:17.5px;color:#2e2e2e;font-weight:400;font-style:normal;transform:scaleX(1.0066);">Suchen und</div>
<div class="tx" style="left:1733.90px;top:182.00px;font-size:17.5px;line-height:17.5px;color:#2e2e2e;font-weight:400;font-style:normal;transform:scaleX(0.9847);">Auswählen</div>
<div class="tx" style="left:3.30px;top:209.00px;font-size:15.5px;line-height:15.5px;color:#2e2e2e;font-weight:400;font-style:normal;transform:scaleX(0.9884);">Zwischenablage</div>
<div class="tx" style="left:230.66px;top:209.00px;font-size:15.5px;line-height:15.5px;color:#2e2e2e;font-weight:400;font-style:normal;transform:scaleX(1.0393);">Schriftart</div>
<div class="tx" style="left:568.60px;top:209.00px;font-size:15.5px;line-height:15.5px;color:#2e2e2e;font-weight:400;font-style:normal;transform:scaleX(1.0272);">Ausrichtung</div>
<div class="tx" style="left:901.30px;top:209.00px;font-size:15.5px;line-height:15.5px;color:#2e2e2e;font-weight:400;font-style:normal;transform:scaleX(1.0103);">Zahl</div>
<div class="tx" style="left:1172.73px;top:209.00px;font-size:15.5px;line-height:15.5px;color:#2e2e2e;font-weight:400;font-style:normal;transform:scaleX(1.0248);">Formatvorlagen</div>
<div class="tx" style="left:1482.20px;top:209.00px;font-size:15.5px;line-height:15.5px;color:#2e2e2e;font-weight:400;font-style:normal;transform:scaleX(1.0098);">Zellen</div>
<div class="tx" style="left:1665.80px;top:209.00px;font-size:15.5px;line-height:15.5px;color:#2e2e2e;font-weight:400;font-style:normal;transform:scaleX(0.9973);">Bearbeiten</div>
<div class="tx" style="left:13.80px;top:253.00px;font-size:19.5px;line-height:19.5px;color:#333;font-weight:400;font-style:normal;transform:scaleX(1.0174);">A1</div>
<div class="tx" style="left:130.20px;top:959.00px;font-size:19.5px;line-height:19.5px;color:#217346;font-weight:700;font-style:normal;transform:scaleX(1.0263);">Tabelle1</div>
<div class="tx" style="left:6.36px;top:996.00px;font-size:14.8px;line-height:14.8px;color:#444;font-weight:400;font-style:normal;transform:scaleX(1.0395);">Bereit</div>
<div class="tx" style="left:1867.96px;top:996.00px;font-size:15px;line-height:15px;color:#444;font-weight:400;font-style:normal;transform:scaleX(1.0415);">100 %</div>
<div class="tx" style="left:154.30px;top:162.00px;font-size:22px;line-height:22px;color:#4d4d4d;font-weight:700;font-style:normal;transform:scaleX(0.9000);">F</div>
<div class="tx" style="left:182.90px;top:162.00px;font-size:22px;line-height:22px;color:#4d4d4d;font-weight:700;font-style:italic;transform:scaleX(0.9353);">K</div>
<div class="tx" style="left:212.82px;top:162.00px;font-size:22px;line-height:22px;color:#4d4d4d;font-weight:700;font-style:normal;transform:scaleX(0.9786);">U</div>
<div class="tx" style="left:348.90px;top:119.00px;font-size:23px;line-height:23px;color:#505050;font-weight:400;font-style:normal;transform:scaleX(1.0733);">A</div>
<div class="tx" style="left:379.80px;top:122.00px;font-size:19.5px;line-height:19.5px;color:#505050;font-weight:400;font-style:normal;transform:scaleX(0.9923);">A</div>
<div class="tx" style="left:364.59px;top:162.00px;font-size:21.5px;line-height:21.5px;color:#5a5a5a;font-weight:700;font-style:normal;transform:scaleX(1.1071);">A</div>
<div class="tx" style="left:889.90px;top:162.00px;font-size:24px;line-height:24px;color:#555;font-weight:400;font-style:normal;transform:scaleX(0.9950);">%</div>
<div class="tx" style="left:919.63px;top:167.00px;font-size:13.5px;line-height:13.5px;color:#555;font-weight:400;font-style:normal;transform:scaleX(0.9714);">000</div>
<div class="tx" style="left:968.59px;top:161.00px;font-size:11.5px;line-height:11.5px;color:#555;font-weight:400;font-style:normal;transform:scaleX(1.3125);">,0</div>
<div class="tx" style="left:960.99px;top:174.00px;font-size:11.5px;line-height:11.5px;color:#555;font-weight:400;font-style:normal;transform:scaleX(1.2133);">,00</div>
<div class="tx" style="left:990.55px;top:161.00px;font-size:11.5px;line-height:11.5px;color:#555;font-weight:400;font-style:normal;transform:scaleX(1.2467);">,00</div>
<div class="tx" style="left:998.69px;top:174.00px;font-size:11.5px;line-height:11.5px;color:#555;font-weight:400;font-style:normal;transform:scaleX(1.3125);">,0</div>
<div class="tx" style="left:40px;width:119px;text-align:center;top:301px;font-size:19.5px;line-height:19.5px;color:#000">A</div>
<div class="tx" style="left:160px;width:119px;text-align:center;top:301px;font-size:19.5px;line-height:19.5px;color:#000">B</div>
<div class="tx" style="left:280px;width:119px;text-align:center;top:301px;font-size:19.5px;line-height:19.5px;color:#000">C</div>
<div class="tx" style="left:400px;width:119px;text-align:center;top:301px;font-size:19.5px;line-height:19.5px;color:#000">D</div>
<div class="tx" style="left:520px;width:119px;text-align:center;top:301px;font-size:19.5px;line-height:19.5px;color:#000">E</div>
<div class="tx" style="left:640px;width:119px;text-align:center;top:301px;font-size:19.5px;line-height:19.5px;color:#000">F</div>
<div class="tx" style="left:760px;width:119px;text-align:center;top:301px;font-size:19.5px;line-height:19.5px;color:#000">G</div>
<div class="tx" style="left:880px;width:119px;text-align:center;top:301px;font-size:19.5px;line-height:19.5px;color:#000">H</div>
<div class="tx" style="left:1000px;width:119px;text-align:center;top:301px;font-size:19.5px;line-height:19.5px;color:#000">I</div>
<div class="tx" style="left:1120px;width:119px;text-align:center;top:301px;font-size:19.5px;line-height:19.5px;color:#000">J</div>
<div class="tx" style="left:1240px;width:119px;text-align:center;top:301px;font-size:19.5px;line-height:19.5px;color:#000">K</div>
<div class="tx" style="left:1360px;width:119px;text-align:center;top:301px;font-size:19.5px;line-height:19.5px;color:#000">L</div>
<div class="tx" style="left:1480px;width:119px;text-align:center;top:301px;font-size:19.5px;line-height:19.5px;color:#000">M</div>
<div class="tx" style="left:1600px;width:119px;text-align:center;top:301px;font-size:19.5px;line-height:19.5px;color:#000">N</div>
<div class="tx" style="left:1720px;width:119px;text-align:center;top:301px;font-size:19.5px;line-height:19.5px;color:#000">O</div>
<div class="tx" style="left:0px;width:39px;text-align:center;top:329px;font-size:19.5px;line-height:19.5px;color:#000">1</div>
<div class="tx" style="left:0px;width:39px;text-align:center;top:358px;font-size:19.5px;line-height:19.5px;color:#000">2</div>
<div class="tx" style="left:0px;width:39px;text-align:center;top:387px;font-size:19.5px;line-height:19.5px;color:#000">3</div>
<div class="tx" style="left:0px;width:39px;text-align:center;top:416px;font-size:19.5px;line-height:19.5px;color:#000">4</div>
<div class="tx" style="left:0px;width:39px;text-align:center;top:445px;font-size:19.5px;line-height:19.5px;color:#000">5</div>
<div class="tx" style="left:0px;width:39px;text-align:center;top:474px;font-size:19.5px;line-height:19.5px;color:#000">6</div>
<div class="tx" style="left:0px;width:39px;text-align:center;top:503px;font-size:19.5px;line-height:19.5px;color:#000">7</div>
<div class="tx" style="left:0px;width:39px;text-align:center;top:532px;font-size:19.5px;line-height:19.5px;color:#000">8</div>
<div class="tx" style="left:0px;width:39px;text-align:center;top:561px;font-size:19.5px;line-height:19.5px;color:#000">9</div>
<div class="tx" style="left:0px;width:39px;text-align:center;top:590px;font-size:19.5px;line-height:19.5px;color:#000">10</div>
<div class="tx" style="left:0px;width:39px;text-align:center;top:619px;font-size:19.5px;line-height:19.5px;color:#000">11</div>
<div class="tx" style="left:0px;width:39px;text-align:center;top:648px;font-size:19.5px;line-height:19.5px;color:#000">12</div>
<div class="tx" style="left:0px;width:39px;text-align:center;top:677px;font-size:19.5px;line-height:19.5px;color:#000">13</div>
<div class="tx" style="left:0px;width:39px;text-align:center;top:706px;font-size:19.5px;line-height:19.5px;color:#000">14</div>
<div class="tx" style="left:0px;width:39px;text-align:center;top:735px;font-size:19.5px;line-height:19.5px;color:#000">15</div>
<div class="tx" style="left:0px;width:39px;text-align:center;top:764px;font-size:19.5px;line-height:19.5px;color:#000">16</div>
<div class="tx" style="left:0px;width:39px;text-align:center;top:793px;font-size:19.5px;line-height:19.5px;color:#000">17</div>
<div class="tx" style="left:0px;width:39px;text-align:center;top:822px;font-size:19.5px;line-height:19.5px;color:#000">18</div>
<div class="tx" style="left:0px;width:39px;text-align:center;top:851px;font-size:19.5px;line-height:19.5px;color:#000">19</div>
<div class="tx" style="left:0px;width:39px;text-align:center;top:880px;font-size:19.5px;line-height:19.5px;color:#000">20</div>
<div class="tx" style="left:0px;width:39px;text-align:center;top:909px;font-size:19.5px;line-height:19.5px;color:#000">21</div>
<div style="position:absolute;left:0;top:932px;width:39px;height:21px;overflow:hidden"><div class="tx" style="left:0px;width:39px;text-align:center;top:6px;font-size:19.5px;line-height:19.5px;color:#000">22</div></div>
</body></html>
